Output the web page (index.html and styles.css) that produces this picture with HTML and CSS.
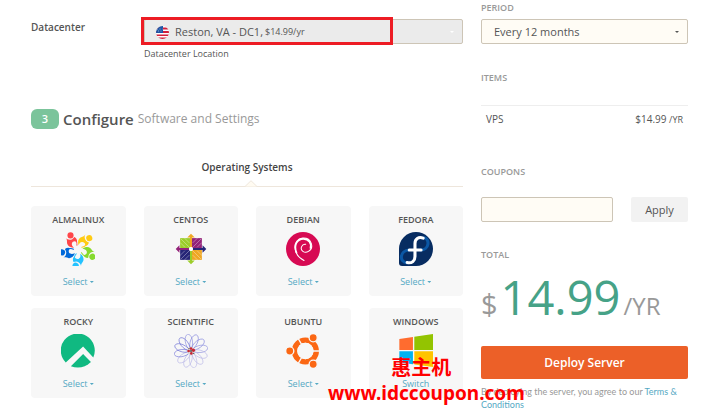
FILE: index.html
```html
<!DOCTYPE html>
<html lang="en">
<head>
    <meta charset="UTF-8">
    <meta name="viewport" content="width=device-width, initial-scale=1.0">
    <title>Configure Server</title>
    <link rel="stylesheet" href="styles.css">
</head>
<body>
    <div class="container">
        <main class="main">
            <div class="form-row">
                <label class="form-label" for="datacenter">Datacenter</label>
                <div class="form-field">
                    <div class="select-wrap datacenter">
                        <select id="datacenter" name="datacenter">
                            <option>Reston, VA - DC1,</option>
                        </select>
                        <svg class="flag" viewBox="0 0 26 26" aria-hidden="true">
                            <clipPath id="round"><circle cx="13" cy="13" r="13"/></clipPath>
                            <g clip-path="url(#round)">
                                <path fill="#fff" d="M0 0h26v26H0z"/>
                                <path fill="#d2203c" d="M0 3h26v4H0zM0 10h26v4H0zM0 17h26v3H0zM0 23h26v3H0z"/>
                                <path fill="#1f55a5" d="M0 0h14v14H0z"/>
                                <path stroke="#fff" stroke-dasharray="2 3" d="M2 6h11M4 10h9"/>
                            </g>
                        </svg>
                        <span class="price">$14.99/yr</span>
                        <svg class="caret" viewBox="0 0 4 2" aria-hidden="true"><path d="M0 0h4L2 2z"/></svg>
                        <span class="highlight"></span>
                    </div>
                    <p class="help">Datacenter Location</p>
                </div>
            </div>

            <h2 class="step"><span class="step-number">3</span> Configure <small>Software and Settings</small></h2>

            <h3 class="tab">Operating Systems
                <svg viewBox="0 0 14 7" aria-hidden="true"><path fill="#fffbf2" stroke="#eee6dc" d="M0 6.500h1L7 .7l6 5.800h1"/></svg>
            </h3>

            <div class="systems">
                <section class="system">
                    <h4>ALMALINUX</h4>
                    <svg class="logo" viewBox="0 0 100 100" aria-hidden="true">
                        <defs>
                            <g id="person">
                                <circle cx="28" cy="10" r="9" stroke="none"/>
                                <path stroke="none" d="M14 18c5 5 13 6 19 3 3-2 5-5 7-6 5 3 8 8 7 14-6-4-14-2-15 5-1 5 2 9 6 12-9 1-18-4-20-12-1-6 1-11-4-16z"/>
                                <path fill="none" stroke-width="3" stroke-linecap="round" d="M43 24c4 5 5 10 4 15"/>
                            </g>
                        </defs>
                        <use href="#person" fill="#ff4649" stroke="#ff4649"/>
                        <use href="#person" fill="#ffcb12" stroke="#ffcb12" transform="rotate(72 50 52)"/>
                        <use href="#person" fill="#86da2f" stroke="#86da2f" transform="rotate(144 50 52)"/>
                        <use href="#person" fill="#24c2ff" stroke="#24c2ff" transform="rotate(216 50 52)"/>
                        <use href="#person" fill="#0069da" stroke="#0069da" transform="rotate(288 50 52)"/>
                    </svg>
                    <a href="#">Select <i class="arrow"></i></a>
                </section>
                <section class="system">
                    <h4>CENTOS</h4>
                    <svg class="logo" viewBox="0 0 100 100" aria-hidden="true">
                        <path fill="#9ccd2a" d="M18 18h29v29H18z"/><path fill="#932279" d="M53 18h29v29H53z"/>
                        <path fill="#262577" d="M18 53h29v29H18z"/><path fill="#efa724" d="M53 53h29v29H53z"/>
                        <path fill="none" stroke="#fff" stroke-opacity=".5" stroke-width="2" d="M50 14v72M14 50h72M20 20l60 60M80 20L20 80M18 31l14 14M68 45l14-14M18 69l14-14M68 55l14 14M31 18l14 14M69 18L55 32M31 82l14-14M69 82L55 68"/>
                        <path fill="#efa724" d="M47 45V16h-8L50 5l11 11h-8v29z"/><path fill="#262577" d="M55 47h29v-8l11 11-11 11v-8H55z"/>
                        <path fill="#9ccd2a" d="M47 55v29h-8l11 11 11-11h-8V55z"/><path fill="#932279" d="M45 47H16v-8L5 50l11 11v-8h29z"/>
                        <circle cx="50" cy="50" r="6" fill="#fff"/>
                    </svg>
                    <a href="#">Select <i class="arrow"></i></a>
                </section>
                <section class="system">
                    <h4>DEBIAN</h4>
                    <svg class="logo" viewBox="0 0 100 100" aria-hidden="true">
                        <circle cx="50" cy="50" r="50" fill="#d70a53"/>
                        <path fill="none" stroke="#fff" stroke-width="3" stroke-linecap="round" d="M53 84C18 66 18 22 49 18c26-2 35 28 17 39-12 7-25-3-20-14 2-5 7-8 12-7"/>
                        <path fill="none" stroke="#fff" stroke-width="5" stroke-linecap="round" d="M31 61C21 38 34 20 51 20c16 0 25 14 21 27"/>
                    </svg>
                    <a href="#">Select <i class="arrow"></i></a>
                </section>
                <section class="system">
                    <h4>FEDORA</h4>
                    <svg class="logo" viewBox="0 0 100 100" aria-hidden="true">
                        <path fill="#072c61" d="M50 0a50 50 0 0 1 0 100H9a9 9 0 0 1-9-9V50A50 50 0 0 1 50 0z"/>
                        <path fill="none" stroke="#0b57a4" stroke-width="9" d="M30 53c-28 1-31 36-6 38M62 53c28 2 30-35 10-37"/>
                        <path fill="none" stroke="#fff" stroke-width="9" stroke-linecap="round" d="M71 18c-14-5-24 3-24 16v38c0 13-9 21-23 18M30 53h35"/>
                    </svg>
                    <a href="#">Select <i class="arrow"></i></a>
                </section>
                <section class="system">
                    <h4>ROCKY</h4>
                    <svg class="logo" viewBox="0 0 100 100" aria-hidden="true">
                        <path fill="#10b981" d="M14 84A50 50 0 1 1 95 69L65 37z"/>
                        <path fill="#10b981" d="M29 95l36-36 23 23C71 100 48 102 29 95z"/>
                    </svg>
                    <a href="#">Select <i class="arrow"></i></a>
                </section>
                <section class="system">
                    <h4>SCIENTIFIC</h4>
                    <svg class="logo" viewBox="0 0 100 100" aria-hidden="true">
                        <defs><path id="petal" d="M50 50C28 35 30 3 40 1s21 19 10 49"/></defs>
                        <g fill="none" stroke="#8e90df" stroke-width="2">
                            <use href="#petal"/><use href="#petal" transform="rotate(30 50 50)"/><use href="#petal" transform="rotate(60 50 50)"/><use href="#petal" transform="rotate(90 50 50)"/>
                        </g>
                        <g fill="none" stroke="#bdbce9" stroke-width="2">
                            <use href="#petal" transform="rotate(120 50 50)"/><use href="#petal" transform="rotate(150 50 50)"/><use href="#petal" transform="rotate(180 50 50)"/><use href="#petal" transform="rotate(210 50 50)"/><use href="#petal" transform="rotate(240 50 50)"/>
                        </g>
                        <g fill="none" stroke="#7779d8" stroke-width="2">
                            <use href="#petal" transform="rotate(270 50 50)"/><use href="#petal" transform="rotate(300 50 50)"/><use href="#petal" transform="rotate(330 50 50)"/>
                        </g>
                        <circle cx="50" cy="50" r="11" fill="#ddd"/>
                        <g fill="#c62735"><circle cx="50" cy="43" r="4"/><circle cx="43" cy="50" r="4"/><circle cx="57" cy="48" r="5"/><circle cx="51" cy="57" r="4"/></g>
                        <g fill="#555"><circle cx="44" cy="43" r="2"/><circle cx="50" cy="50" r="3"/><circle cx="58" cy="57" r="2"/></g>
                    </svg>
                    <a href="#">Select <i class="arrow"></i></a>
                </section>
                <section class="system">
                    <h4>UBUNTU</h4>
                    <svg class="logo" viewBox="0 0 100 100" aria-hidden="true">
                        <circle cx="57" cy="50" r="32" fill="none" stroke="#fb6714" stroke-width="16"/>
                        <path stroke="#f7f7f7" stroke-width="4" d="M57 50L34 10M57 50h45M57 50L34 90"/>
                        <circle cx="57" cy="50" r="24" fill="#f7f7f7"/>
                        <g fill="#fb6714" stroke="#f7f7f7" stroke-width="4"><circle cx="11" cy="50" r="12"/><circle cx="80" cy="11" r="12"/><circle cx="80" cy="89" r="12"/></g>
                    </svg>
                    <a href="#">Select <i class="arrow"></i></a>
                </section>
                <section class="system">
                    <h4>WINDOWS</h4>
                    <svg class="logo" viewBox="0 0 100 100" aria-hidden="true">
                        <path fill="#ff6c2f" d="M1 15l40-6v38H1z"/><path fill="#93c401" d="M45 8l55-8v47H45z"/>
                        <path fill="#00b3f0" d="M1 51h40v38L1 84z"/><path fill="#ffc400" d="M45 51h55v46l-55-7z"/>
                    </svg>
                    <a href="#">Switch</a>
                </section>
            </div>
        </main>

        <aside class="summary">
            <label class="heading" for="period">PERIOD</label>
            <div class="select-wrap">
                <select id="period" name="period">
                    <option>Every 12 months</option>
                </select>
                <svg class="caret" viewBox="0 0 4 2" aria-hidden="true"><path d="M0 0h4L2 2z"/></svg>
            </div>

            <h3 class="heading items-heading">ITEMS</h3>
            <div class="item">
                <span>VPS</span>
                <span>$14.99 <small>/YR</small></span>
            </div>

            <label class="heading coupon-heading" for="coupon">COUPONS</label>
            <div class="coupon">
                <input type="text" id="coupon" name="coupon">
                <button type="button" class="apply">Apply</button>
            </div>

            <h3 class="heading total-heading">TOTAL</h3>
            <div class="total"><span>$</span><strong>14.99</strong><span class="per">/YR</span></div>

            <button type="button" class="deploy">Deploy Server</button>
            <p class="terms">By deploying the server, you agree to our <a href="#">Terms &amp; Conditions</a></p>
        </aside>

        <div class="watermark"><span>惠主机</span>www.idccoupon.com</div>
    </div>
</body>
</html>
```
FILE: styles.css
```css
* {
    box-sizing: border-box;
}
body {
    margin: 0;
    background-color: #fff;
    color: #555;
    font-family: "Open Sans", "Noto Sans", sans-serif;
    font-size: 11px;
    line-height: 16px;
}
h2, h3, h4, p {
    margin: 0;
}
a {
    color: #55a9c4;
    text-decoration: none;
}
select, input, button {
    font: inherit;
    color: inherit;
}
.container {
    position: relative;
    display: grid;
    grid-template-columns: minmax(0, 1fr) 207px;
    gap: 18px;
    padding: 0 17px 0 31px;
}

/* form */
.form-row {
    display: flex;
    padding-top: 19px;
}
.form-label {
    width: 113px;
    font-size: 10px;
    font-weight: 600;
}
.form-field {
    flex: 1;
}
.select-wrap {
    position: relative;
}
select, input {
    display: block;
    width: 100%;
    height: 25px;
    padding: 0 12px;
    border: 1px solid #cdc5b6;
    border-radius: 2px;
    background-color: #fffcf5;
    appearance: none;
}
.caret {
    position: absolute;
    top: 12px;
    right: 9px;
    width: 4px;
    height: 2px;
    fill: #555;
}
.datacenter select {
    padding-left: 30px;
    background-color: #ebebeb;
}
.datacenter .caret {
    fill: #fff;
}
.flag {
    position: absolute;
    top: 7px;
    left: 12px;
    width: 13px;
    height: 13px;
}
.price {
    position: absolute;
    top: 5px;
    left: 121px;
    font-size: 9px;
}
.highlight {
    position: absolute;
    top: -2px;
    bottom: -1px;
    left: -3px;
    width: 252px;
    border: 3px solid #ed1c24;
}
.help {
    padding-top: 2px;
    font-size: 9px;
}

/* step title */
.step {
    display: flex;
    align-items: center;
    gap: 4px;
    margin-top: 47px;
    font-size: 15px;
    line-height: 20px;
    font-weight: 600;
}
.step-number {
    width: 28px;
    height: 20px;
    border-radius: 6px;
    background-color: #7bc49b;
    color: #fff;
    font-size: 11px;
    text-align: center;
}
.step small {
    color: #999;
    font-size: 12px;
    font-weight: 400;
}
.tab {
    position: relative;
    margin-top: 30px;
    padding-bottom: 11px;
    border-bottom: 1px solid #eee6dc;
    color: #444;
    font-size: 10px;
    font-weight: 600;
    text-align: center;
}
.tab svg {
    position: absolute;
    bottom: -1px;
    left: calc(50% - 3px);
    width: 14px;
    height: 7px;
}

/* operating systems */
.systems {
    display: grid;
    grid-template-columns: repeat(4, 1fr);
    gap: 12px 18px;
    margin-top: 19px;
}
.system {
    display: flex;
    flex-direction: column;
    align-items: center;
    padding: 6px 0;
    border-radius: 4px;
    background-color: #f7f7f7;
    font-size: 9px;
}
.system h4 {
    color: #555;
    font-size: 9px;
    font-weight: 600;
}
.logo {
    width: 34px;
    height: 34px;
    margin: 4px 0 8px;
}
.arrow {
    display: inline-block;
    width: 4px;
    height: 2px;
    background-color: currentColor;
    clip-path: polygon(0 0, 100% 0, 50% 100%);
    vertical-align: 2px;
}

/* order summary */
.heading {
    display: block;
    color: #999;
    font-size: 9px;
    font-weight: 600;
}
.summary .select-wrap {
    margin-top: 3px;
}
.items-heading {
    margin-top: 26px;
}
.item {
    display: flex;
    justify-content: space-between;
    margin-top: 19px;
    padding: 5px 5px 0;
    border-top: 1px solid #eee;
    font-size: 10px;
}
.item small {
    font-size: 9px;
}
.coupon-heading {
    margin-top: 36px;
}
.coupon {
    display: flex;
    gap: 18px;
    margin-top: 17px;
}
.coupon input {
    flex: 1;
    min-width: 0;
}
.apply {
    width: 57px;
    height: 25px;
    padding: 0;
    border: 0;
    border-radius: 2px;
    background-color: #f2f2f2;
}
.total-heading {
    margin-top: 25px;
}
.total {
    display: flex;
    align-items: baseline;
    gap: 3px;
    margin-top: 7px;
    color: #999;
    font-size: 29px;
    line-height: 54px;
}
.total strong {
    color: #46a287;
    font-size: 47px;
    font-weight: 500;
}
.total .per {
    font-size: 24px;
}
.deploy {
    display: block;
    width: 100%;
    height: 33px;
    margin-top: 13px;
    border: 0;
    border-radius: 2px;
    background-color: #ec6028;
    color: #fff;
    font-size: 12px;
    font-weight: 600;
}
.terms {
    margin-top: 6px;
    color: #999;
    font-family: Lato, "Open Sans", sans-serif;
    font-size: 9px;
    line-height: 13px;
}

.watermark {
    position: absolute;
    top: 356px;
    left: 328px;
    color: #f00;
    font-family: "Noto Sans", "Noto Sans CJK SC", sans-serif;
    font-size: 19px;
    font-weight: 700;
    line-height: 26px;
    text-align: center;
}
.watermark span {
    display: block;
    padding-right: 10px;
    font-size: 20px;
    line-height: 24px;
}
```
